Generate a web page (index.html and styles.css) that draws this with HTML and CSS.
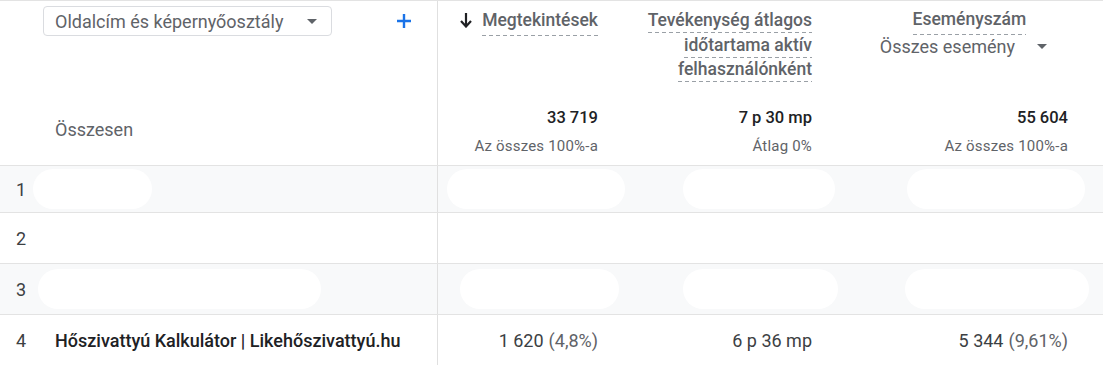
FILE: index.html
```html
<!DOCTYPE html>
<html lang="hu">
<head>
<meta charset="utf-8">
<title>Oldalcím és képernyőosztály</title>
<link rel="stylesheet" href="styles.css">
</head>
<body>
<div class="table">
  <div class="head">
    <div class="hcell dimcell">
      <div class="dimtop">
        <div class="select">
          <span>Oldalcím és képernyőosztály</span>
          <svg class="caret" width="10" height="5" viewBox="0 0 10 5"><path d="M0 0h10L5 5z" fill="#5f6368"/></svg>
        </div>
        <svg class="plus" width="14" height="14" viewBox="0 0 14 14"><path d="M7 0v14M0 7h14" stroke="#1a73e8" stroke-width="2.4"/></svg>
      </div>
      <div class="total-label">Összesen</div>
    </div>
    <div class="hcell metric">
      <div class="label">
        <svg class="arrow" width="12" height="15" viewBox="0 0 12 15"><path d="M6 0v13M1 8l5 5.5L11 8" stroke="#202124" stroke-width="2.2" fill="none"/></svg>
        <span class="dash">Megtekintések</span>
      </div>
      <div class="totals">
        <div class="tval">33 719</div>
        <div class="tsub">Az összes 100%-a</div>
      </div>
    </div>
    <div class="hcell metric">
      <div class="label multi">
        <span class="dash">Tevékenység átlagos</span><br><span class="dash">időtartama aktív</span><br><span class="dash">felhasználónként</span>
      </div>
      <div class="totals">
        <div class="tval">7 p 30 mp</div>
        <div class="tsub">Átlag 0%</div>
      </div>
    </div>
    <div class="hcell metric last">
      <div class="label events">
        <span class="dash evlabel">Eseményszám</span>
        <div class="evsel">Összes esemény <svg class="caret2" width="10" height="5" viewBox="0 0 10 5"><path d="M0 0h10L5 5z" fill="#5f6368"/></svg></div>
      </div>
      <div class="totals">
        <div class="tval">55 604</div>
        <div class="tsub">Az összes 100%-a</div>
      </div>
    </div>
  </div>

  <div class="row alt r1">
    <div class="cell dim"><span class="num">1</span><span class="redact w119 ml22"></span></div>
    <div class="cell val"><span class="redact w178 mr27"></span></div>
    <div class="cell val"><span class="redact w152 mr23"></span></div>
    <div class="cell val last"><span class="redact w178 mr17"></span></div>
  </div>
  <div class="row">
    <div class="cell dim"><span class="num">2</span></div>
    <div class="cell val"></div>
    <div class="cell val"></div>
    <div class="cell val last"></div>
  </div>
  <div class="row alt">
    <div class="cell dim"><span class="num">3</span><span class="redact w283 ml17"></span></div>
    <div class="cell val"><span class="redact w159 mr21"></span></div>
    <div class="cell val"><span class="redact w155 mr26"></span></div>
    <div class="cell val last"><span class="redact w184 mr21"></span></div>
  </div>
  <div class="row">
    <div class="cell dim"><span class="num">4</span><span class="name">Hőszivattyú Kalkulátor | Likehőszivattyú.hu</span></div>
    <div class="cell val">1 620 <span class="pct">(4,8%)</span></div>
    <div class="cell val">6 p 36 mp</div>
    <div class="cell val last">5 344 <span class="pct">(9,61%)</span></div>
  </div>
</div>
</body>
</html>
```

FILE: styles.css
```css
* { box-sizing: border-box; }
html, body { margin: 0; padding: 0; background: #fff; }
body {
  font-family: Roboto, "Noto Sans", "Liberation Sans", sans-serif;
  color: #3c4043;
  width: 1103px;
  height: 365px;
  overflow: hidden;
}
.table {
  border-top: 1px solid #e3e3e3;
}
.head, .row {
  display: grid;
  grid-template-columns: 438px 176px 214px 275px;
}
.head {
  height: 165px;
  border-bottom: 1px solid #e3e3e3;
}
.hcell {
  display: flex;
  flex-direction: column;
  justify-content: space-between;
}
.dimcell {
  border-right: 1px solid #e0e0e0;
  padding: 5px 0 25px 43px;
}
.dimtop {
  display: flex;
  align-items: center;
}
.select {
  width: 289px;
  height: 30px;
  border: 1px solid #dadce0;
  border-radius: 4px;
  padding: 0 0 0 11px;
  display: flex;
  align-items: center;
  font-size: 18px;
  color: #5f6368;
}
.select .caret { margin-left: 24px; }
.plus { margin-left: 65px; }
.total-label {
  padding-left: 12px;
  font-size: 18px;
  color: #5f6368;
  line-height: 20px;
}
.metric {
  align-items: flex-end;
  padding: 7px 16px 9px 0;
  text-align: right;
}
.metric.last { padding-right: 35px; }
.label {
  font-size: 17.5px;
  font-weight: 500;
  color: #5f6368;
  line-height: 24.5px;
  display: flex;
  align-items: flex-start;
}
.label.multi { display: block; }
.arrow { margin: 5px 10px 0 0; }
.dash {
  padding-bottom: 3px;
  background-image: repeating-linear-gradient(to right, #9aa0a6 0 4px, transparent 4px 7px);
  background-size: 100% 1px;
  background-position: 0 100%;
  background-repeat: no-repeat;
}
.events {
  flex-direction: column;
  align-items: center;
  margin-right: 21px;
}
.evlabel { margin-left: 12px; margin-top: -1px; }
.evsel {
  font-weight: 400;
  font-size: 18px;
  color: #5f6368;
  display: flex;
  align-items: center;
  margin-top: 0;
}
.caret2 { margin-left: 22px; }
.totals { line-height: 20px; }
.tval {
  font-size: 16.5px;
  font-weight: 500;
  color: #202124;
}
.tsub {
  margin-top: 8px;
  font-size: 15px;
  color: #5f6368;
  letter-spacing: 0.2px;
}
.row {
  border-bottom: 1px solid #e3e3e3;
  height: 51px;
  font-size: 18px;
}
.row.r1 { height: 47px; }
.row.alt { background: #f8f9fa; }
.cell {
  display: flex;
  align-items: center;
}
.cell.dim {
  border-right: 1px solid #e0e0e0;
  padding-left: 16px;
}
.num {
  width: 39px;
  flex: none;
}
.name {
  font-weight: 500;
  color: #202124;
}
.val {
  justify-content: flex-end;
  padding-right: 16px;
  color: #3c4043;
}
.val.last { padding-right: 35px; }
.pct { color: #5f6368; margin-left: 5px; }
.redact {
  display: block;
  flex: none;
  height: 40px;
  background: #fff;
  border-radius: 20px;
}
.w119 { width: 119px; }
.w152 { width: 152px; }
.w155 { width: 155px; }
.w159 { width: 159px; }
.w178 { width: 178px; }
.w184 { width: 184px; }
.w283 { width: 283px; }
.ml22 { margin-left: -22px; }
.ml17 { margin-left: -17px; }
.mr17 { margin-right: -17px; }
.mr21 { margin-right: -21px; }
.mr23 { margin-right: -23px; }
.mr26 { margin-right: -26px; }
.mr27 { margin-right: -27px; }
```
